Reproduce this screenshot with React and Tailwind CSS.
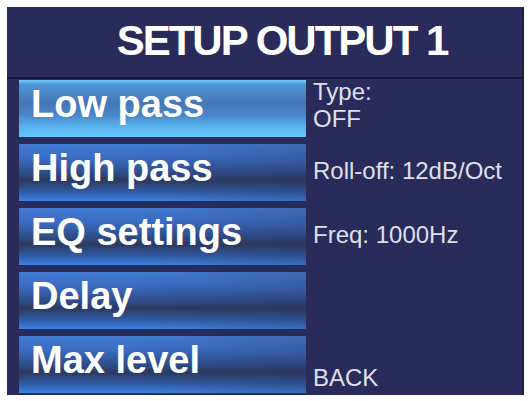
import React from "react";

const items = ["Low pass", "High pass", "EQ settings", "Delay", "Max level"];

const selectedBg =
  "bg-[linear-gradient(to_bottom,#74cdf8_0%,#4f97d9_8%,#4676b6_40%,#4a86c8_62%,#56b0ec_80%,#64c8fa_100%)]";
const normalBg =
  "bg-[linear-gradient(to_right,rgba(0,0,0,0)_40%,rgba(40,48,80,0.25)_100%),linear-gradient(to_bottom,#437cd6_0%,#3a6cc2_25%,#30508e_48%,#2a3a60_64%,#305ba6_84%,#3e82e0_100%)]";

function MenuButton({ label, selected }) {
  return (
    <div
      className={`h-[57px] flex items-start pt-[5px] pl-[12px] ${
        selected ? selectedBg : normalBg
      }`}
    >
      <span className="text-white font-bold text-[38px] leading-none">
        {label}
      </span>
    </div>
  );
}

export default function App() {
  return (
    <div
      className="w-[531px] h-[401px] bg-white pt-[7px] pl-[7px]"
      style={{ fontFamily: '"Liberation Sans", Arial, sans-serif' }}
    >
      <div className="w-[517px] h-[388px] bg-[#292b5b] flex flex-col border-r-2 border-[#1c1e44]">
        <div className="h-[70px] pt-[13px] pl-[35px] flex justify-center">
          <h1 className="text-white font-bold text-[42px] leading-none tracking-[-2px]">
            SETUP OUTPUT 1
          </h1>
        </div>
        <div className="h-[2px] bg-[#15173a]" />
        <div className="flex pl-[12px] pt-[1px] gap-[7px]">
          <div className="w-[287px] flex flex-col gap-[7px]">
            {items.map((label, i) => (
              <MenuButton key={label} label={label} selected={i === 0} />
            ))}
          </div>
          <div className="flex-1 flex flex-col gap-[7px] text-[#dfe0ec] text-[24px] leading-[27px]">
            <div className="h-[57px] -mt-[2px]">
              <div>Type:</div>
              <div>OFF</div>
            </div>
            <div className="h-[57px] flex items-center">Roll-off: 12dB/Oct</div>
            <div className="h-[57px] flex items-center">Freq: 1000Hz</div>
            <div className="h-[57px]" />
            <div className="h-[57px] flex items-end">BACK</div>
          </div>
        </div>
      </div>
    </div>
  );
}
